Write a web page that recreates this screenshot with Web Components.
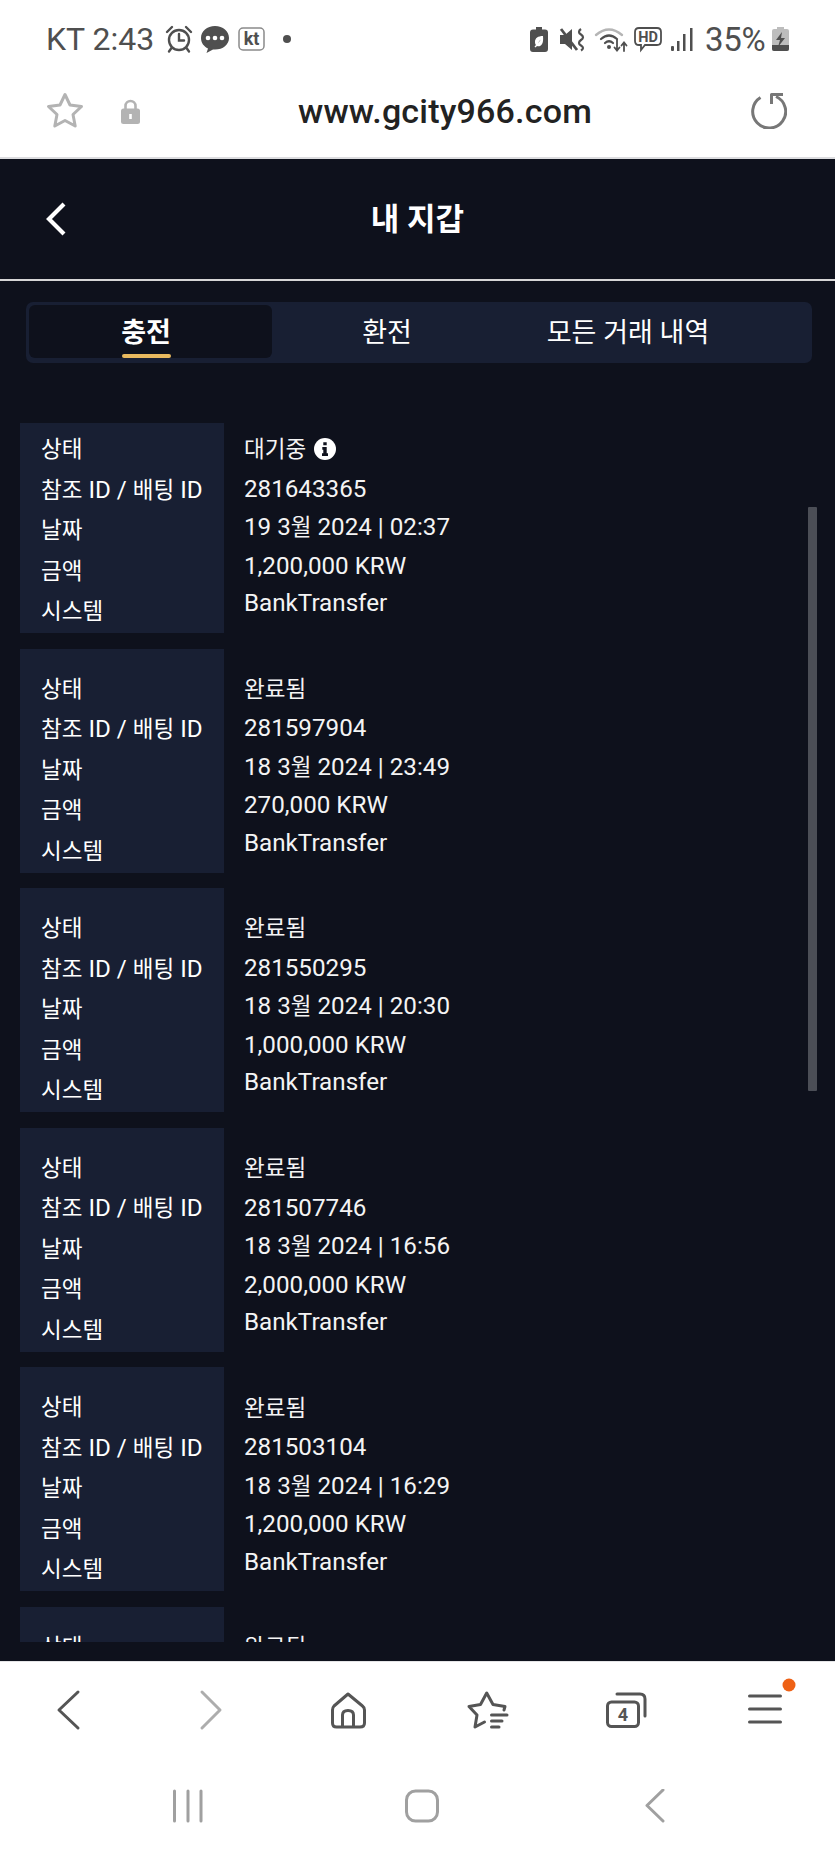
<!DOCTYPE html>
<html lang="ko"><head><meta charset="utf-8"><title>내 지갑</title>
<style>
html,body{margin:0;padding:0;background:#fff}
body{width:835px;height:1856px;overflow:hidden;font-family:Roboto,"Noto Sans CJK KR",sans-serif}
</style></head><body>
<phone-app></phone-app>
<script>
const FONT='Roboto,"Noto Sans CJK KR",sans-serif';
function def(name,html){
  customElements.define(name,class extends HTMLElement{
    constructor(){super();const r=this.attachShadow({mode:'open'});r.innerHTML=typeof html==='function'?html(this):html;}
  });
}
const K=s=>s.replace(/[가-힣]+/g,m=>`<span class="k">${m}</span>`);
def('status-bar',`<style>
:host{display:flex;align-items:center;height:56px;padding:11px 46px 0;color:#4f4f4f;font:400 32px ${FONT}}
svg{display:block;flex:none;overflow:visible}
.t{white-space:nowrap;line-height:30px}
.sp{flex:1}
</style>
<span class="t" style="width:119px">KT 2:43</span>
<svg width="28" height="28" viewBox="0 0 28 28" fill="none" stroke="#4f4f4f" stroke-width="2.4" stroke-linecap="round"><circle cx="14" cy="15" r="10"/><path d="M14 9v6.5h5M2 7l5-5M26 7l-5-5M6.500 23l-2.500 3.500M21.500 23l2.500 3.500"/></svg>
<svg style="margin-left:7px" width="30" height="28" viewBox="0 0 30 28"><path fill="#4f4f4f" d="M15 1C7 1 1 6 1 13c0 5 3 8.500 7 10.500L6.500 28l6.500-3.500c.7.100 1.300.100 2 .100 8 0 14-5 14-11.600S23 1 15 1z"/><circle cx="8" cy="13" r="2.300" fill="#fff"/><circle cx="15" cy="13" r="2.300" fill="#fff"/><circle cx="22" cy="13" r="2.300" fill="#fff"/></svg>
<svg style="margin-left:8px" width="27" height="24" viewBox="0 0 27 24"><rect x="1" y="1" width="25" height="22" rx="4" fill="#fff" stroke="#8a8a8a" stroke-width="1.500"/><text x="13.500" y="18" text-anchor="middle" font-family="Roboto,sans-serif" font-weight="700" font-size="18" fill="#4f4f4f">kt</text></svg>
<svg style="margin-left:18px" width="8" height="8" viewBox="0 0 8 8"><circle cx="4" cy="4" r="4" fill="#4f4f4f"/></svg>
<span class="sp"></span>
<svg width="18" height="25" viewBox="0 0 18 25"><path fill="#4f4f4f" d="M6 0h6v2.500h3q3 0 3 3V22q0 3-3 3H3q-3 0-3-3V5.500q0-3 3-3h3z"/><path fill="#fff" d="M13 9c-5 0-8 2-8 6 0 1.500.5 2.500 1 3l-1.500 1.500 1 1L7 19c3 1 7-.500 6-10zM8 16.500q1-3 3-4-1.500 1.500-3 4z"/></svg>
<svg style="margin-left:12px" width="25" height="23" viewBox="0 0 25 23" fill="none"><path fill="#4f4f4f" d="M0 7h5L12 1v21L5 16H0z"/><path stroke="#4f4f4f" stroke-width="2.800" d="M1 1l16 21"/><path stroke="#4f4f4f" stroke-width="2.200" d="M21 1q-4 3 0 5.500t0 5.500 0 5.500 0 5"/></svg>
<svg style="margin-left:10px" width="32" height="25" viewBox="0 0 32 25" fill="none" stroke-linecap="round"><path stroke="#b5b5b5" stroke-width="2.400" d="M1 8q13-11 26 0"/><path stroke="#4f4f4f" stroke-width="2.200" d="M6 12q8-7 16 0M10 16q4-3.500 8 0"/><circle cx="14" cy="20" r="2" fill="#4f4f4f"/><path stroke="#4f4f4f" stroke-width="1.800" d="M22 13v10M19.500 20.500l2.500 3 2.500-3M29 24V16M26.500 18.500l2.500-3 2.500 3"/></svg>
<svg style="margin-left:7px" width="28" height="24" viewBox="0 0 28 24"><path fill="#fff" stroke="#4f4f4f" stroke-width="1.800" d="M5 1h18q4 0 4 4v9q0 4-4 4H11l-4 5v-5H5q-4 0-4-4V5q0-4 4-4z"/><text x="14" y="15" text-anchor="middle" font-family="Roboto,sans-serif" font-weight="700" font-size="14.500" fill="#4f4f4f">HD</text></svg>
<svg style="margin-left:9px" width="22" height="23" viewBox="0 0 22 23" fill="#4f4f4f"><rect x="0" y="18" width="3" height="5" rx="1"/><rect x="6" y="13" width="2.500" height="10"/><rect x="12" y="6" width="2.500" height="17"/><rect x="19" y="0" width="2.500" height="23"/></svg>
<span class="t" style="margin-left:12px;width:67px;font-size:33px;letter-spacing:-.3px;position:relative;top:1px">35%</span>
<svg width="17" height="24" viewBox="0 0 17 24"><path fill="#bdbdbd" d="M5 0h7v2h3q2 0 2 2v18q0 2-2 2H2q-2 0-2-2V4q0-2 2-2h3z"/><path fill="#4f4f4f" d="M0 18h17v4q0 2-2 2H2q-2 0-2-2z"/><path fill="#4f4f4f" d="M10 5L4 13h4l-2 7 7-9H9z"/></svg>`);

def('address-bar',`<style>
:host{display:flex;align-items:center;height:92px;padding:0 46px 2px;box-sizing:border-box;border-bottom:2px solid #dcdcdf}
svg{display:block;flex:none}
.url{margin-left:158px;font:500 34px ${FONT};color:#222;white-space:nowrap;letter-spacing:.2px}
.sp{flex:1}
</style>
<svg width="38" height="38" viewBox="0 0 38 38"><path fill="none" stroke="#b3b3b3" stroke-width="3" stroke-linejoin="round" d="M19 2.500l5 10.500 11.500 1.500-8.500 8 2.200 11.500L19 28.500 8.800 34l2.200-11.500-8.500-8L14 13z"/></svg>
<svg style="margin-left:37px" width="19" height="25" viewBox="0 0 19 25"><path fill="none" stroke="#b3b3b3" stroke-width="2.600" d="M4.500 11V7a5 5 0 0 1 10 0v4"/><rect y="9.500" width="19" height="15.500" rx="2.500" fill="#b3b3b3"/><rect x="8.200" y="15" width="2.600" height="5" fill="#fff"/></svg>
<span class="url">www.gcity966.com</span><span class="sp"></span>
<svg style="margin-right:2px;margin-bottom:2px" width="38" height="38" viewBox="0 0 38 38" fill="none" stroke="#777" stroke-width="3"><path d="M11.500 6.500A16.500 16.500 0 1 0 27 5.500"/><path d="M22.500 13V3.500H34" stroke-linejoin="round"/></svg>`);

def('wallet-header',`<style>
:host{display:flex;align-items:center;height:122px;box-sizing:border-box;border-bottom:2px solid #d6d6d6;position:relative;padding-left:46px}
svg{display:block}
h1{margin:0;position:absolute;left:0;right:0;top:41px;text-align:center;font:700 31px/40px ${FONT};color:#fff}
</style>
<svg width="20" height="34" viewBox="0 0 20 34"><path fill="none" stroke="#fff" stroke-width="4.200" d="M18 2L3 17l15 15"/></svg><h1>내 지갑</h1>`);

def('wallet-tabs',`<style>
:host{display:grid;grid-template-columns:243px 230px 252px;margin:21px 23px 0 26px;height:61px;box-sizing:border-box;padding:3px;background:#181f33;border-radius:7px;color:#fff;font:400 27px ${FONT}}
div{display:flex;align-items:center;justify-content:center;height:53px;padding-bottom:2px;box-sizing:border-box}
.a{background:#0e111c;border-radius:6px;font-weight:700;position:relative;padding-right:9px}
.a i{position:absolute;left:93px;width:49px;height:4px;bottom:0;background:#e8b95e;border-radius:2px}
</style><div class="a">충전<i></i></div><div>환전</div><div>모든 거래 내역</div>`);

def('tx-card',h=>{
 const info=h.hasAttribute('info')?`<svg width="22" height="22" viewBox="0 0 22 22" style="margin-left:8px;flex:none"><circle cx="11" cy="11" r="11" fill="#fff"/><path fill="#10131e" d="M9.300 4.300h3.400v3h-3.400zM8.300 9h4.400v6.300h1.300V18H8v-2.700h1.300v-3.600h-1z"/></svg>`:'';
 const v=n=>K(h.getAttribute(n));
 return `<style>
:host{display:grid;grid-template-columns:204px 1fr;column-gap:21px;color:#fff;font:400 24.200px ${FONT};margin-bottom:15.600px}
.k{font-size:22.500px}
.l{background:#181f33;padding:20px 0 1px 21px;height:224px;box-sizing:border-box}
.l div{height:40.500px;line-height:40.500px;white-space:nowrap}
.v{padding-top:21px;margin-left:-1px}
.v div{height:38.500px;line-height:36px;box-sizing:border-box;display:flex;align-items:center;white-space:pre;color:#f4f4f4}
.v .s{padding-top:2px}
</style><div class="l"><div>${K('상태')}</div><div>${K('참조 ID / 배팅 ID')}</div><div>${K('날짜')}</div><div>${K('금액')}</div><div>${K('시스템')}</div></div>
<div class="v"><div>${v('status')}${info}</div><div class="s">${v('ref')}</div><div class="s"><span>${v('date')}</span></div><div class="s">${v('amount')}</div><div>BankTransfer</div></div>`;
});

def('tx-list',`<style>
:host{display:block;height:1219px;margin:60px 0 19px 20px;overflow:hidden;position:relative}
.in{margin-top:-14px}
.sb{position:absolute;left:788px;top:84px;width:9px;height:584px;background:#4b4e56;border-radius:1px}
</style><div class="in"><slot></slot></div><div class="sb"></div>`);

def('wallet-page',`<style>:host{display:block;background:#0e111c;height:1502px;overflow:hidden}</style>
<wallet-header></wallet-header><wallet-tabs></wallet-tabs>
<tx-list>
<tx-card info status="대기중" ref="281643365" date="19 3월 2024 | 02:37" amount="1,200,000 KRW"></tx-card>
<tx-card status="완료됨" ref="281597904" date="18 3월 2024 | 23:49" amount="270,000 KRW"></tx-card>
<tx-card status="완료됨" ref="281550295" date="18 3월 2024 | 20:30" amount="1,000,000 KRW"></tx-card>
<tx-card status="완료됨" ref="281507746" date="18 3월 2024 | 16:56" amount="2,000,000 KRW"></tx-card>
<tx-card status="완료됨" ref="281503104" date="18 3월 2024 | 16:29" amount="1,200,000 KRW"></tx-card>
<tx-card status="완료됨" ref="281490000" date="18 3월 2024 | 15:00" amount="1,000,000 KRW"></tx-card>
</tx-list>`);

def('browser-nav',`<style>
:host{display:grid;grid-template-columns:repeat(6,1fr);height:98px;padding-bottom:2px;align-items:center;justify-items:center;border-top:1px solid #e4e4e6;box-sizing:border-box}
svg{display:block;overflow:visible;fill:none;stroke:#555;stroke-width:3;stroke-linecap:round;stroke-linejoin:round}
</style>
<svg width="48" height="48" viewBox="0 0 48 48"><path d="M32 6L13 24l19 18"/></svg>
<svg width="48" height="48" viewBox="0 0 48 48" style="stroke:#adadad"><path d="M17 6l18 18-18 18"/></svg>
<svg width="48" height="48" viewBox="0 0 48 48"><path d="M24 8L10 20q-1.500 1.500-1.500 4v13q0 4 4 4H36q4.500 0 4.500-4V24q0-2.500-2-4zM18.500 41V29q0-4.500 5.500-4.500T29.500 29v12"/></svg>
<svg width="48" height="48" viewBox="0 0 48 48"><path d="M41 24l1-3.500-12-2L23.700 7l-6.200 11.500L6 20.500l8 8.500-2 12 9.500-5"/><path d="M28.500 29H44M28.500 35H39M28.500 41H36"/></svg>
<svg width="48" height="48" viewBox="0 0 48 48"><rect x="5.500" y="16" width="31" height="24.500" rx="4"/><path d="M15 8h23q5 0 5 5v17"/><text x="21" y="35" text-anchor="middle" font-family="Roboto,sans-serif" font-weight="700" font-size="18" fill="#555" stroke="none">4</text></svg>
<svg width="48" height="48" viewBox="0 0 48 48"><path d="M8.500 10h31M8.500 23h31M8.500 36h31"/><circle cx="48" cy="-1" r="6.500" fill="#ee6115" stroke="none"/></svg>`);

def('system-nav',`<style>
:host{display:grid;grid-template-columns:repeat(3,234px);padding:0 0 3px 71px;height:97px;box-sizing:border-box;align-items:center;justify-items:center}
svg{display:block;fill:none;stroke:#a0a0a0;stroke-width:3;stroke-linecap:round;stroke-linejoin:round}
</style>
<svg width="36" height="34" viewBox="0 0 36 34"><path d="M4.500 2v30M18 2v30M31 2v30"/></svg>
<svg width="36" height="34" viewBox="0 0 36 34"><rect x="2.500" y="2" width="31" height="30" rx="9"/></svg>
<svg width="36" height="34" viewBox="0 0 36 34"><path d="M25 1L9 16.500 25 32"/></svg>`);

def('phone-app',`<style>:host{display:block;width:835px;height:1856px;overflow:hidden;background:#fff}</style>
<status-bar></status-bar><address-bar></address-bar><wallet-page></wallet-page><browser-nav></browser-nav><system-nav></system-nav>`);
</script></body></html>
